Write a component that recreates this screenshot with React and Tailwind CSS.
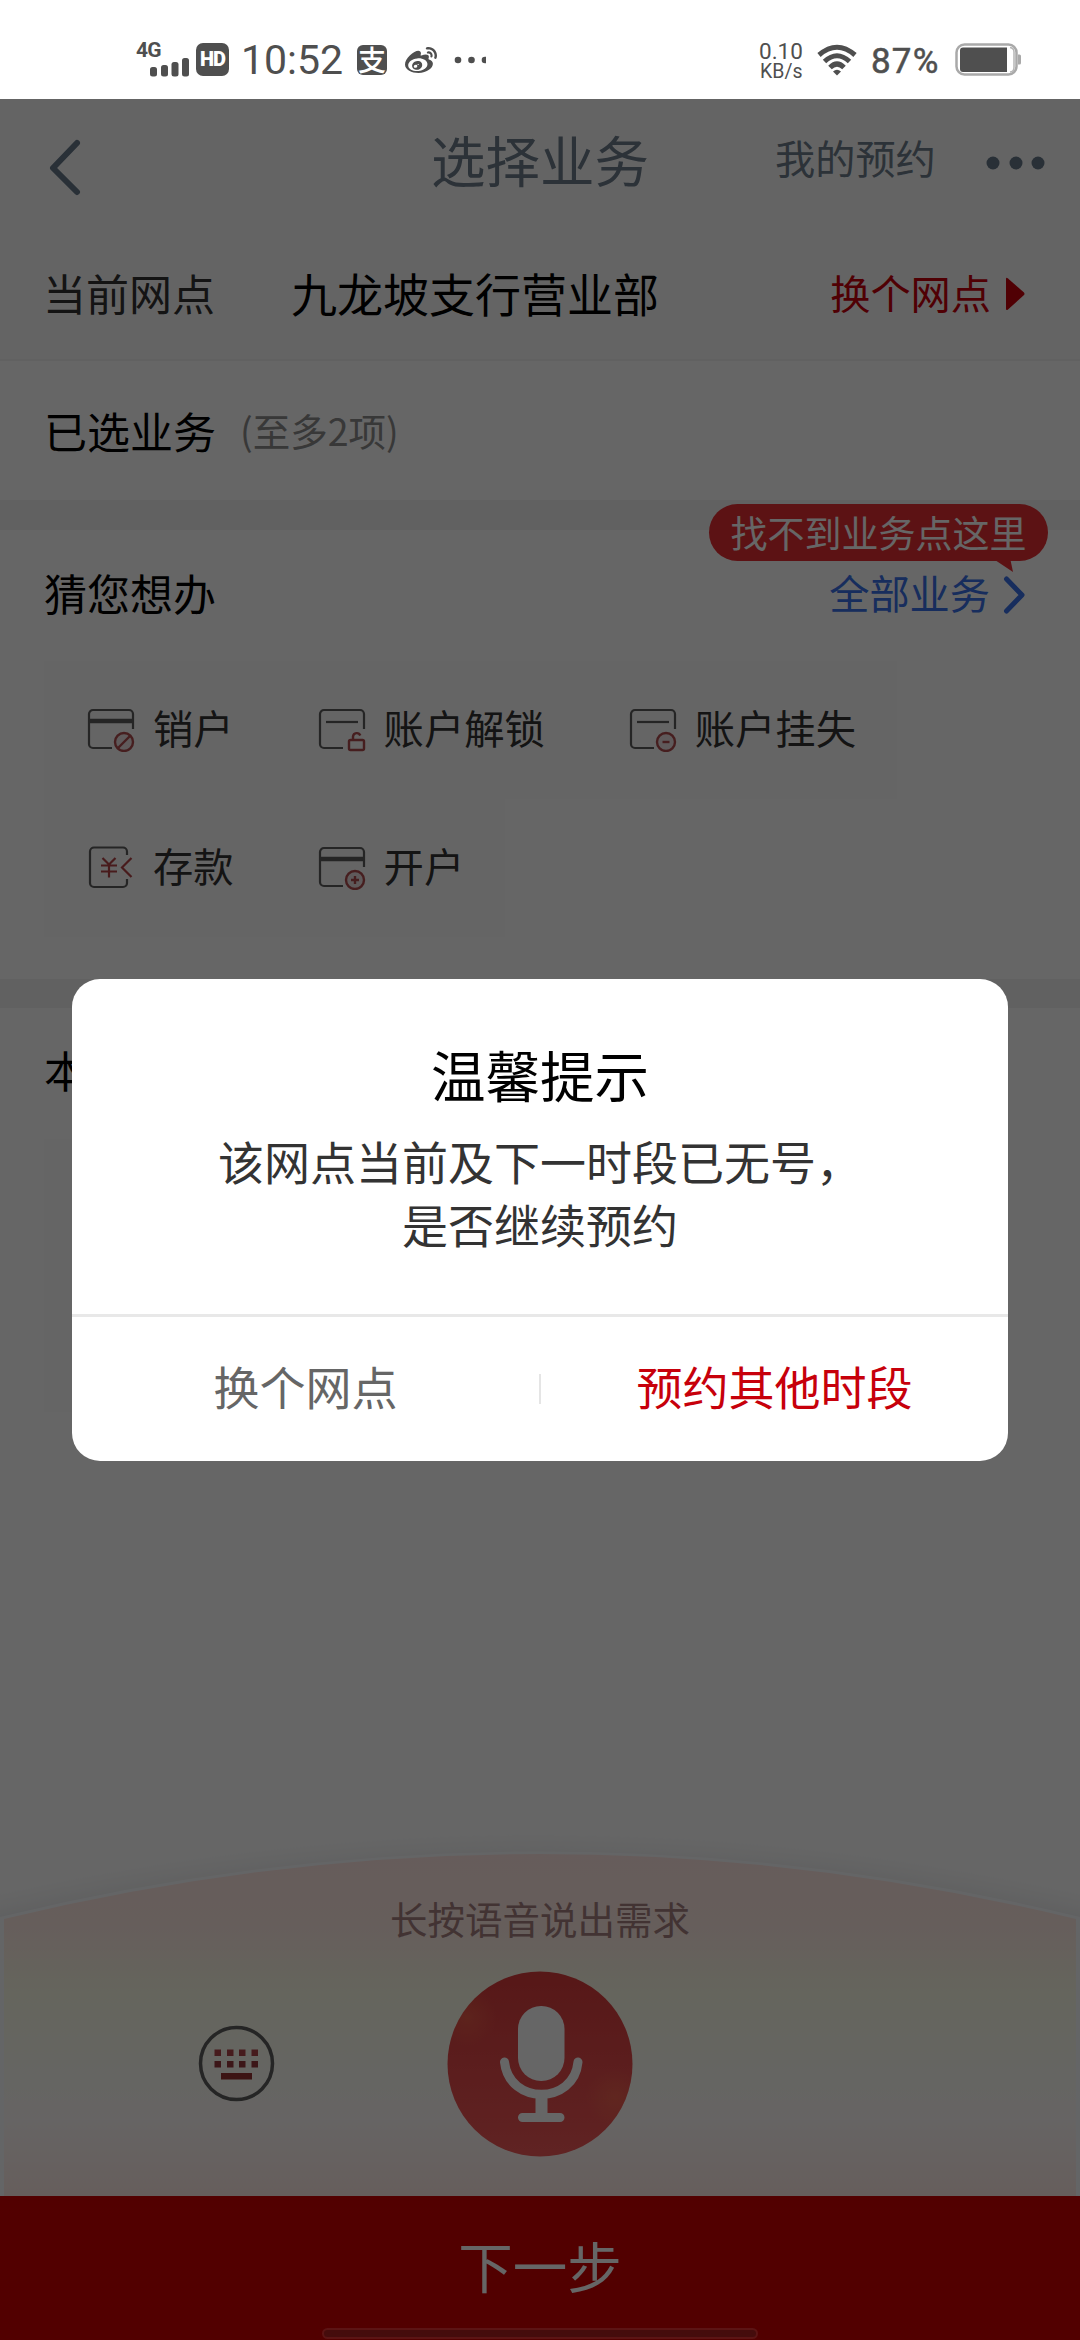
import React from 'react';
import { FaWeibo } from "react-icons/fa";

const Signal = () => (
  <svg className="absolute left-[14px] top-[18px] w-10 h-5" viewBox="0 0 40 20" fill="#4f4f4f">
    <rect x="0" y="9" width="7" height="9.5" rx="2.5" />
    <rect x="11" y="7" width="7" height="11.5" rx="2.5" />
    <rect x="21.5" y="4" width="7" height="14.5" rx="2.5" />
    <rect x="32" y="0" width="7" height="18.5" rx="2.5" />
  </svg>
);

const Wifi = () => (
  <svg className="w-10 h-8" viewBox="0 0 40 32" fill="none" stroke="#4f4f4f" strokeWidth="5">
    <path d="M2 11 Q20 -4.5 38 11" />
    <path d="M7.5 17.5 Q20 6 32.5 17.5" />
    <path d="M13 23.5 Q20 16.5 27 23.5" />
    <path d="M16 27.5 Q20 24 24 27.5 L20 31.5 Z" fill="#4f4f4f" stroke="none" />
  </svg>
);

const Battery = () => (
  <svg className="w-[67px] h-[34px]" viewBox="0 0 67 34" fill="none">
    <rect x="1.5" y="1.5" width="60" height="30" rx="8" stroke="#a9a9a9" strokeWidth="2.5" />
    <path d="M63 11.5 h1.5 a1.5 1.5 0 0 1 1.5 1.5 v7 a1.5 1.5 0 0 1 -1.5 1.5 h-1.5 z" fill="#a9a9a9" />
    <path d="M8 4.5 H52 V29 H8 a3 3 0 0 1 -3 -3 V7.5 a3 3 0 0 1 3 -3 z" fill="#4f4f4f" />
    <path d="M55 4.5 a4.5 4.5 0 0 1 4 4.5 v15.5 a4.5 4.5 0 0 1 -4 4.5" stroke="#b5b5b5" strokeWidth="1.5" />
  </svg>
);

const StatusBar = () => (
  <div className="h-[99px] bg-white flex items-start justify-between pl-[136px] pr-[58px] text-[#4f4f4f] font-[Roboto,sans-serif]">
    <div className="flex items-start">
      <div className="relative w-[60px] h-[36px] mt-10">
        <span className="block text-[21px] leading-[20px] font-bold tracking-[-0.8px]">4G</span>
        <Signal />
      </div>
      <span className="mt-[43px] w-[33px] h-[33px] rounded-[7px] bg-[#4f4f4f] text-white text-[20px] font-black leading-[33px] text-center tracking-[-1px]">HD</span>
      <span className="ml-[12px] mt-[36px] w-[104px] text-[41px] leading-[48px]">10:52</span>
      <span className="ml-[12px] mt-[45px] w-[30px] h-[30px] rounded-[6px] bg-[#4f4f4f] text-white text-[28px] font-medium leading-[28px] text-center font-['Noto_Sans_CJK_SC',sans-serif]">支</span>
      <FaWeibo className="ml-[18px] mt-[45px] w-[32px] h-[32px]" />
      <svg className="ml-[17px] mt-[56px] w-8 h-2" viewBox="0 0 32 8" fill="#4f4f4f">
        <circle cx="4" cy="4" r="3.3" />
        <circle cx="17.5" cy="4" r="3.3" />
        <circle cx="31" cy="4" r="3.3" />
      </svg>
    </div>
    <div className="flex items-start">
      <div className="w-[58px] mt-[40px]">
        <span className="block text-[22.5px] leading-[22px]">0.10</span>
        <span className="block text-[19.5px] leading-[19px] pl-[1px]">KB/s</span>
      </div>
      <span className="mt-[44px]"><Wifi /></span>
      <span className="ml-[14px] mt-[42px] w-[84px] text-[35px] leading-[40px] tracking-[1.2px] [-webkit-text-stroke:0.5px_#4f4f4f]">87%</span>
      <span className="mt-[43px]"><Battery /></span>
    </div>
  </div>
);

const CardOutline = ({ striped }) => (
  <g fill="none" stroke="#5c5c5c" strokeWidth="2.2">
    <path d="M25 40 H6 a4 4 0 0 1 -4 -4 V6 a4 4 0 0 1 4 -4 H42 a4 4 0 0 1 4 4 V21" />
    {striped
      ? <path d="M1 13 H46" strokeWidth="4.5" />
      : <path d="M8 14 H40" />}
  </g>
);

const icons = {
  close: (
    <>
      <CardOutline striped />
      <g fill="none" stroke="#b04c4e" strokeWidth="2.4">
        <circle cx="37" cy="34" r="9" fill="#d8bcc0" fillOpacity="0.4" />
        <path d="M31 40 L43 28" />
      </g>
    </>
  ),
  unlock: (
    <>
      <CardOutline />
      <g fill="none" stroke="#b04c4e" strokeWidth="2.4">
        <rect x="31" y="32" width="15" height="10" rx="1.5" />
        <path d="M35 32 V28.5 a3.8 3.8 0 0 1 7.3 -1" />
      </g>
    </>
  ),
  lost: (
    <>
      <CardOutline />
      <g fill="none" stroke="#b04c4e" strokeWidth="2.4">
        <circle cx="37" cy="34" r="9" fill="#d8bcc0" fillOpacity="0.4" />
        <path d="M33.5 34 H40.5" />
      </g>
    </>
  ),
  deposit: (
    <g fill="none" strokeWidth="2.2">
      <path d="M40 9 V5.5 a4 4 0 0 0 -4 -4 H7 a4 4 0 0 0 -4 4 V37 a4 4 0 0 0 4 4 H36 a4 4 0 0 0 4 -4 V33" stroke="#5c5c5c" />
      <path d="M15.5 12 L22 18.5 L28.5 12 M14 19.5 H30 M14 25.5 H30 M22 18.5 V31.5 M44.5 12 L35 21.5 L44.5 31" stroke="#b44448" />
    </g>
  ),
  open: (
    <>
      <CardOutline striped />
      <g fill="none" stroke="#b04c4e" strokeWidth="2.4">
        <circle cx="37" cy="34" r="9" fill="#d8bcc0" fillOpacity="0.4" />
        <path d="M33 34 H41 M37 30 V38" />
      </g>
    </>
  ),
};

const services = [
  [
    { icon: 'close', name: '销户' },
    { icon: 'unlock', name: '账户解锁' },
    { icon: 'lost', name: '账户挂失' },
  ],
  [
    { icon: 'deposit', name: '存款' },
    { icon: 'open', name: '开户' },
  ],
];

const ServiceTile = ({ item }) => (
  <div className="h-full flex items-center pl-[43px] pr-[41px] bg-[#fcfcfc]">
    <svg className="w-[48px] h-[44px] mr-[18px] shrink-0" viewBox="0 0 48 44">{icons[item.icon]}</svg>
    <span className="mb-[7px] text-[40.3px] leading-[60px] text-[#333]">{item.name}</span>
  </div>
);

const Header = () => (
  <div className="h-[127px] flex items-start">
    <div className="w-[430px] pl-[48px] pt-[40px]">
      <svg className="w-[34px] h-[58px]" viewBox="0 0 34 58" fill="none" stroke="#66788a" strokeWidth="6" strokeLinecap="round" strokeLinejoin="round">
        <path d="M29 4 L5 29 L29 53" />
      </svg>
    </div>
    <h1 className="mt-[20px] w-[345px] pl-px text-[54.5px] leading-[80px] text-[#6e7d8c]">选择业务</h1>
    <span className="mt-[28px] text-[40.2px] leading-[60px] text-[#6e7d8c]">我的预约</span>
    <svg className="ml-[50px] mt-[56px] w-[60px] h-[16px]" viewBox="0 0 60 16" fill="#66788a">
      <circle cx="7" cy="8" r="6.5" />
      <circle cx="30" cy="8" r="6.5" />
      <circle cx="52" cy="8" r="6.5" />
    </svg>
  </div>
);

const VoicePanel = () => (
  <div className="relative h-[376px] flex flex-col">
    <svg className="absolute inset-0 w-full h-full overflow-hidden" viewBox="0 0 1080 376">
      <defs>
        <linearGradient id="panel" x1="0" y1="0" x2="0" y2="1">
          <stop offset="0" stopColor="#ffe7e4" />
          <stop offset="0.2" stopColor="#ffeae4" />
          <stop offset="0.4" stopColor="#fcfce8" />
          <stop offset="0.63" stopColor="#fcfdf4" />
          <stop offset="0.78" stopColor="#fffaf9" />
          <stop offset="1" stopColor="#ffebe6" />
        </linearGradient>
        <filter id="soften" x="-10%" y="-30%" width="120%" height="160%">
          <feGaussianBlur stdDeviation="13" />
        </filter>
      </defs>
      <path d="M-80 112 Q540 -46 1160 112 V200 H-80 Z" fill="#e8eaec" filter="url(#soften)" />
      <path d="M0 97 Q540 -34 1080 97 V376 H0 Z" fill="#fbfdff" />
      <path d="M4 99 Q540 -31 1076 99 V376 H4 Z" fill="url(#panel)" />
    </svg>
    <p className="relative mt-[70px] text-center text-[37.5px] leading-[56px] text-[#a67f7f]">长按语音说出需求</p>
    <div className="relative flex items-center mt-[24px] h-[187px]">
      <svg className="ml-[198px] w-[77px] h-[77px]" viewBox="0 0 77 77">
        <circle cx="38.5" cy="38.5" r="36" fill="none" stroke="#5c5c5c" strokeWidth="3.5" />
        <g fill="#b0444a">
          {[16.5, 29, 41, 53.5].map((x) => (
            <React.Fragment key={x}>
              <rect x={x} y="24.5" width="6.5" height="6.5" />
              <rect x={x} y="36" width="6.5" height="6.5" fill="#96383c" />
            </React.Fragment>
          ))}
          <rect x="23" y="48" width="31" height="6.5" fill="#963434" />
        </g>
      </svg>
      <svg className="ml-[172px] w-[186px] h-[186px]" viewBox="0 0 186 186">
        <defs>
          <linearGradient id="mic" x1="0" y1="0" x2="0" y2="1">
            <stop offset="0" stopColor="#d83c3c" />
            <stop offset="1" stopColor="#f05858" />
          </linearGradient>
          <radialGradient id="glow">
            <stop offset="0" stopColor="#ff8050" stopOpacity="0.35" />
            <stop offset="1" stopColor="#ff8050" stopOpacity="0" />
          </radialGradient>
          <clipPath id="disc">
            <circle cx="93" cy="93" r="92.5" />
          </clipPath>
        </defs>
        <g clipPath="url(#disc)">
          <rect width="186" height="186" fill="url(#mic)" />
          <circle cx="20" cy="46" r="30" fill="url(#glow)" />
          <circle cx="168" cy="126" r="30" fill="url(#glow)" />
        </g>
        <rect x="71" y="35" width="46.5" height="75" rx="23" fill="#fff" />
        <path d="M57.5 91 C62 134 127 134 131 91 M75.5 146.5 H113" fill="none" stroke="#fff" strokeWidth="9" strokeLinecap="round" />
        <path d="M94.5 122 V146" stroke="#fff" strokeWidth="12" />
      </svg>
    </div>
  </div>
);

const Dialog = () => (
  <div className="w-[936px] h-[482px] rounded-[28px] bg-white flex flex-col overflow-hidden">
    <div className="h-[335px] pt-[55px] text-center">
      <h2 className="text-[54.5px] leading-[80px] text-black">温馨提示</h2>
      <p className="mt-[15px] text-[46px] leading-[63px] text-[#333]">
        该网点当前及下一时段已无号，<br />是否继续预约
      </p>
    </div>
    <div className="flex-1 flex items-center border-t-3 border-[#e8e8e8] text-[46px]">
      <button className="flex-1 mb-[8px] text-[#666]">换个网点</button>
      <span className="w-[2px] h-[30px] bg-[#e5e5e5]" />
      <button className="flex-1 mb-[8px] text-[#c7000b]">预约其他时段</button>
    </div>
  </div>
);

const App = () => {
  return (
    <div className="w-[1080px] h-[2340px] overflow-hidden flex flex-col bg-white font-['Noto_Sans_CJK_SC',sans-serif]">
      <StatusBar />
      <div className="relative flex-1 flex flex-col">
        <div className="bg-[#fbfbfb] border-b-2 border-[#f2f2f2] h-[262px]">
          <Header />
          <div className="h-[132px] flex items-center pl-[43px] pr-[55px]">
            <span className="w-[248px] text-[43px] text-[#333]">当前网点</span>
            <span className="flex-1 text-[46px] text-black">九龙坡支行营业部</span>
            <span className="text-[40.2px] text-[#c7000b]">换个网点</span>
            <svg className="ml-[14px] mt-1 w-[20px] h-[34px]" viewBox="0 0 20 34" fill="#c7000b">
              <path d="M1 2 Q1 0 3 1.5 L19 15.5 Q20 17 19 18 L3 32.5 Q1 34 1 31.5 Z" />
            </svg>
          </div>
        </div>

        <div className="h-[139px] flex items-center pl-[44px]">
          <span className="text-[43px] text-black">已选业务</span>
          <span className="ml-[24px] text-[37.5px] text-[#8c8c8c]">(至多2项)</span>
        </div>

        <div className="h-[30px] bg-[#f2f2f2]" />

        <div className="h-[449px] px-[44px]">
          <div className="relative h-[131px] flex items-center justify-between pr-[11px]">
            <span className="mb-[7px] text-[43px] text-black">猜您想办</span>
            <div className="flex items-center">
              <span className="mb-[7px] text-[40.2px] text-[#3a70e8]">全部业务</span>
              <svg className="ml-[13px] w-[22px] h-[38px]" viewBox="0 0 22 38" fill="none" stroke="#3a70e8" strokeWidth="5" strokeLinecap="round" strokeLinejoin="round">
                <path d="M3.5 3 L19 19 L3.5 35" />
              </svg>
            </div>
            <div className="absolute left-[665px] top-[-26px] w-[339px] h-[57px] rounded-full bg-[#e62d32] text-white text-[37px] leading-[56px] text-center">
              找不到业务点这里
              <svg className="absolute left-[286px] top-[56px] w-[18px] h-[12px]" viewBox="0 0 18 12" fill="#e62d32">
                <path d="M0 0 H15.5 L18 12 Z" />
              </svg>
            </div>
          </div>
          {services.map((row, i) => (
            <div key={i} className="h-[138px] flex">
              {row.map((item) => <ServiceTile key={item.name} item={item} />)}
            </div>
          ))}
        </div>

        <div className="h-[29px] bg-[#f2f2f2]" />

        <div className="flex-1 pl-[44px]">
          <div className="h-[131px] pb-[8px] flex items-center text-[43px] text-black">本</div>
          <div className="w-[460px] h-[273px] bg-[#fcfcfc]" />
        </div>

        <VoicePanel />

        <div className="h-[144px] bg-[#cc0000] flex justify-center">
          <span className="text-[54.5px] leading-[137px] text-white">下一步</span>
        </div>

        <div className="absolute inset-0 bg-black/60 flex flex-col items-center justify-between pt-[880px]">
          <Dialog />
          <div className="mb-[1px] w-[436px] h-[11px] rounded-full border-2 border-[#5c1414] bg-[#450c0c]" />
        </div>
      </div>
    </div>
  );
};

export default App;
